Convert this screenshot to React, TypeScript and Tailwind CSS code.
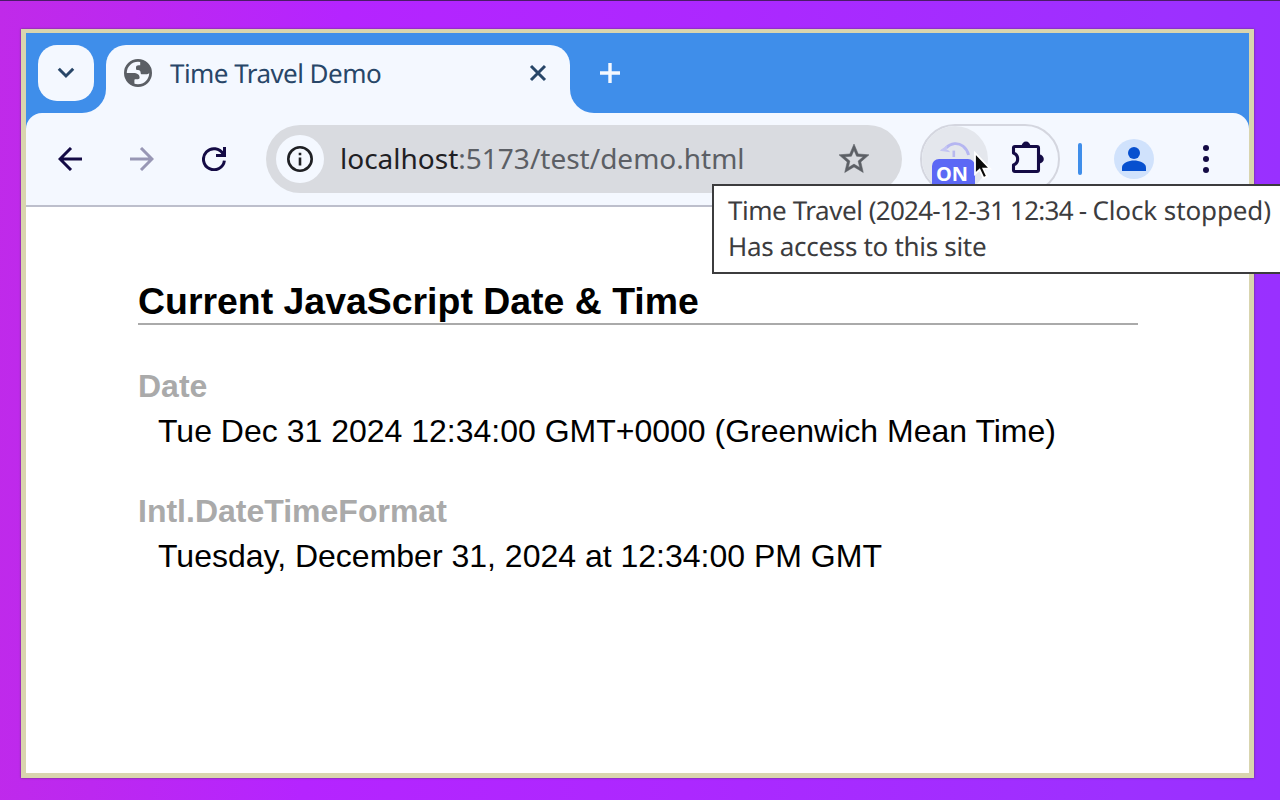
import type { ReactNode } from "react";

const INK = "#140b45";

function Globe() {
  return (
    <svg className="block size-7" viewBox="0 0 28 28">
      <circle cx="14" cy="14" r="12.6" fill="none" stroke="#5b5f65" strokeWidth="2.8" />
      <path
        fill="#5b5f65"
        d="M16.2 1.6 C21 2.2 25.4 5.6 26.6 10.4 C27.2 13 24.6 15.2 22 15.2 H17.6 C17 15.2 16.7 14.8 16.7 14.2 C16.7 11.4 15.4 10.8 13.8 10.9 C12.7 11 12 10.6 12 9.4 V8.6 C12 7 13 6.2 14.6 6.2 H16.2 Z"
      />
      <path
        fill="#5b5f65"
        d="M1.4 14 H9.4 C13.2 14 15.6 15.6 15.6 18.6 C15.6 19.8 15 20.3 13.8 20.3 H11.2 C10.6 20.3 10.4 20.6 10.4 21.2 V25.6 C5.4 24.2 1.8 20.2 1.4 14 Z"
      />
    </svg>
  );
}

function TabStrip() {
  return (
    <div className="flex h-20 items-end bg-[#3f8eea]">
      <div className="z-10 mb-3 ml-3 flex size-14 items-center justify-center rounded-[19px] bg-[#f4f8ff]">
        <svg className="block size-5" viewBox="0 0 20 20" fill="none" stroke="#284668" strokeWidth="3">
          <path d="M2.8 5.8 L10 13 L17.2 5.8" />
        </svg>
      </div>
      <div className="-ml-3 size-6 bg-[#f4f8ff]">
        <div className="size-6 rounded-br-[24px] bg-[#3f8eea]" />
      </div>
      <div className="flex h-[68px] w-[464px] items-center rounded-t-[20px] bg-[#f4f8ff] pb-3 pl-[18px] pr-[22px]">
        <Globe />
        <span className="ml-[18px] flex-1 whitespace-nowrap text-[26px] leading-9 tracking-[-0.55px] text-[#284668] [text-rendering:geometricPrecision]">
          Time Travel Demo
        </span>
        <svg className="block size-5" viewBox="0 0 20 20" fill="none" stroke="#284668" strokeWidth="3">
          <path d="M3 3 L17 17 M17 3 L3 17" />
        </svg>
      </div>
      <div className="size-6 bg-[#f4f8ff]">
        <div className="size-6 rounded-bl-[24px] bg-[#3f8eea]" />
      </div>
      <svg className="mb-[30px] ml-[6px] block size-5" viewBox="0 0 20 20" fill="none" stroke="#f4f8ff" strokeWidth="3.4">
        <path d="M0 10 H20 M10 0 V20" />
      </svg>
    </div>
  );
}

function Pointer() {
  return (
    <svg className="absolute left-[51px] top-[25px] block h-[32px] w-[20px]" viewBox="0 0 20 32">
      <path
        d="M2 2 V23 L6.6 18.8 L10.4 27 L14 25.4 L10.4 17.6 H17 Z"
        fill="#0a0a0a"
        stroke="#ffffff"
        strokeWidth="1.8"
      />
    </svg>
  );
}

function Toolbar() {
  return (
    <div className="bg-[#3f8eea]">
      <div className="flex h-[94px] items-center rounded-t-[16px] border-b-2 border-[#bdbfcc] bg-[#f4f8ff]">
        <svg className="ml-8 block size-6" viewBox="0 0 24 24" fill="none" stroke={INK} strokeWidth="3">
          <path d="M24 12 H2 M13 1 L2 12 L13 23" />
        </svg>
        <svg className="ml-12 block size-6" viewBox="0 0 24 24" fill="none" stroke="#9897b5" strokeWidth="3">
          <path d="M0 12 H22 M11 1 L22 12 L11 23" />
        </svg>
        <svg className="ml-12 block size-6" viewBox="0 0 24 24" fill="none" stroke={INK} strokeWidth="3">
          <path d="M22.4 13.6 A10.5 10.5 0 1 1 21.2 7.2 M22.5 0 V9 M24 8.5 H14" />
        </svg>
        <div className="ml-10 flex h-[68px] w-[636px] items-center rounded-full bg-[#d9dbe0] pl-[10px] pr-[30px]">
          <div className="flex size-12 items-center justify-center rounded-full bg-[#f4f8ff]">
            <svg className="block size-[26px]" viewBox="0 0 26 26">
              <circle cx="13" cy="13" r="11.7" fill="none" stroke="#1f2024" strokeWidth="2.6" />
              <path d="M11.7 11.6 H14.3 V19.6 H11.7 Z M11.7 6.7 H14.3 V9.3 H11.7 Z" fill="#1f2024" />
            </svg>
          </div>
          <span className="mb-[2px] ml-4 flex-1 whitespace-nowrap text-[28px] leading-9 text-[#5c5f65]">
            <span className="text-[#1f2024]">localhost</span>:5173/test/demo.html
          </span>
          <svg className="block size-9" viewBox="0 0 24 24" fill="#5c5f65" stroke="#5c5f65" strokeWidth="0.35">
            <path d="M22 9.24l-7.19-.62L12 2 9.19 8.63 2 9.24l5.46 4.73L5.82 21 12 17.27 18.18 21l-1.63-7.03L22 9.24zM12 15.4l-3.76 2.27 1-4.28-3.32-2.88 4.38-.38L12 6.1l1.71 4.04 4.38.38-3.32 2.88 1 4.28L12 15.4z" />
          </svg>
        </div>
        <div className="relative ml-[18px] flex h-[70px] w-[140px] items-center rounded-full border-2 border-[#d4d6df]">
          <div className="relative size-[66px] rounded-full bg-[#e4e7ed]">
            <svg className="absolute left-[17px] top-[15px] block h-[22px] w-8" viewBox="0 0 32 22" fill="none">
              <path d="M7 7 C12 1.8 19 1.4 24 5.2 C27 7.6 28.8 10.8 29.6 14" stroke="#b5b6f1" strokeWidth="2.8" />
              <path d="M1.6 9.4 L8 5 L6.8 8.4 L10.4 10.6 Z" fill="#c4c5f3" stroke="#c4c5f3" />
              <path d="M14.8 9.6 V16" stroke="#b8b9ee" strokeWidth="2.6" />
            </svg>
            <div className="absolute left-[10px] top-[33px] flex h-8 w-[43px] items-center justify-center rounded-[7px] bg-[#5c68f5] pb-[2px] pr-[3px] text-[20px] font-bold leading-7 text-white">
              ON
            </div>
            <Pointer />
          </div>
          <svg className="mb-1 ml-[22px] block h-[33px] w-[35px]" viewBox="0 0 35 33">
            <path
              d="M5 5.5 H27 Q28.5 5.5 28.5 7 V29 Q28.5 30.5 27 30.5 H5 Q3.5 30.5 3.5 29 V24 A6.4 6.4 0 0 0 3.5 12 V7 Q3.5 5.5 5 5.5 Z"
              fill="none"
              stroke={INK}
              strokeWidth="3.1"
              strokeLinejoin="round"
            />
            <path d="M11.6 5 A4.4 4.4 0 0 1 20.4 5 Z M29.4 13.6 A4.4 4.4 0 0 1 29.4 22.4 Z" fill={INK} />
          </svg>
        </div>
        <div className="ml-[18px] h-8 w-1 rounded-sm bg-[#3f8eea]" />
        <svg className="ml-8 block size-10" viewBox="0 0 40 40">
          <circle cx="20" cy="20" r="20" fill="#d0e2fc" />
          <circle cx="20" cy="14" r="6" fill="#0750cf" />
          <path d="M8 32 V28.4 C8 24 15 21.6 20 21.6 S32 24 32 28.4 V32 Z" fill="#0750cf" />
        </svg>
        <svg className="ml-[49px] block h-7 w-[6px]" viewBox="0 0 6 28" fill={INK}>
          <circle cx="3" cy="3" r="3" />
          <circle cx="3" cy="14" r="3" />
          <circle cx="3" cy="25" r="3" />
        </svg>
      </div>
    </div>
  );
}

function Entry({ name, children }: { name: string; children: ReactNode }) {
  return (
    <div>
      <dt className="text-[32px] font-bold leading-[37px] text-[#aaaaaa]">{name}</dt>
      <dd className="mt-2 whitespace-nowrap pl-5 text-[32px] leading-[37px] text-black">{children}</dd>
    </div>
  );
}

export default function App() {
  return (
    <div className="relative h-[800px] w-[1280px] overflow-hidden border-t border-[#4b1b68] bg-[linear-gradient(93deg,#c02ae9_0%,#bc28f0_10%,#b524ff_26%,#ac28ff_55%,#9d30ff_88%,#9830ff_100%)] pl-[21px] pt-7 font-['Noto_Sans',sans-serif]">
      <div className="flex h-[749px] w-[1233px] flex-col border-x-[5px] border-b-[5px] border-t-4 border-[#d9d5ae] bg-white shadow-[0_0_2px_#5a3a68]">
        <TabStrip />
        <Toolbar />
        <main className="ml-28 mt-[73px] w-[1000px] font-['Liberation_Sans',sans-serif]">
          <h1 className="border-b-2 border-[#aaaaaa] pb-px text-[37.44px] font-bold leading-[42px] text-black">
            Current JavaScript Date &amp; Time
          </h1>
          <dl className="mt-[43px] flex flex-col gap-[43px]">
            <Entry name="Date">Tue Dec 31 2024 12:34:00 GMT+0000 (Greenwich Mean Time)</Entry>
            <Entry name="Intl.DateTimeFormat">Tuesday, December 31, 2024 at 12:34:00 PM GMT</Entry>
          </dl>
        </main>
      </div>
      <div className="absolute left-[712px] top-[183px] h-[90px] w-[580px] whitespace-nowrap border-2 border-[#3c3c3e] bg-white pl-[14px] pt-[6px] text-[26px] leading-9 text-[#3c3c3e] [text-rendering:geometricPrecision]">
        <div className="tracking-[-0.11px]">
          <span className="tracking-[-0.45px]">Time Travel </span>
          <span className="tracking-[-0.75px]">(2024-12-31 12:34 - </span>
          Clock stopped)
        </div>
        <div className="tracking-[-0.31px]">Has access to this site</div>
      </div>
    </div>
  );
}
